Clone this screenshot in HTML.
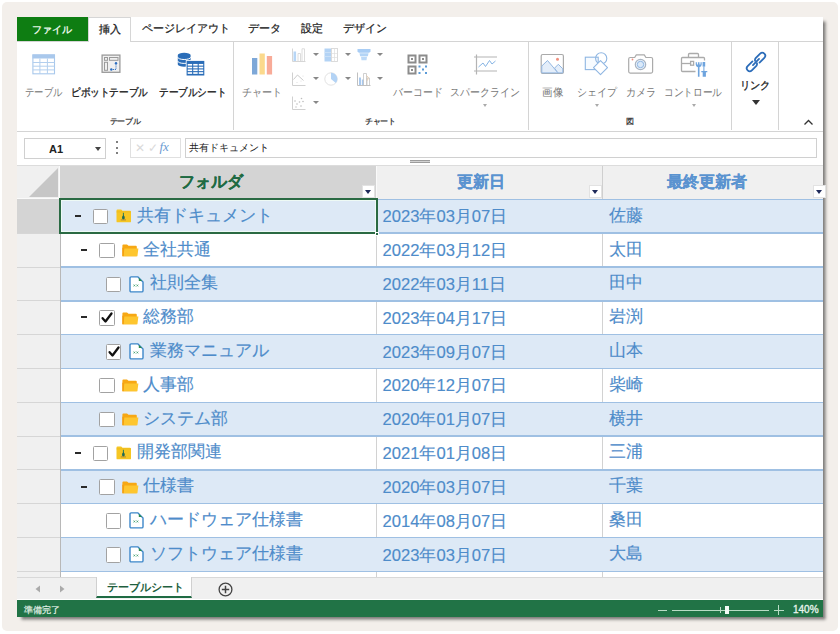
<!DOCTYPE html>
<html><head><meta charset="utf-8">
<style>
*{box-sizing:border-box;margin:0;padding:0}
html,body{width:840px;height:634px;overflow:hidden;background:#fff;font-family:"Liberation Sans",sans-serif}
div,svg{position:absolute}
#frame{left:2px;top:2px;width:836px;height:629px;background:#f3efeb;border-radius:5px}
#app{left:17px;top:17px;width:806px;height:600px;background:#fff;box-shadow:3px 3px 3px -.5px rgba(0,0,0,.5)}
.tab{top:17px;height:25px;font-size:11px;line-height:23px;color:#222;white-space:nowrap;-webkit-text-stroke:.25px #222}
.hl{height:1px;background:#d4d4d4}
.vl{width:1px;background:#d4d4d4}
.lbl{font-size:11px;color:#777;white-space:nowrap;line-height:14px;transform-origin:0 0}
.glbl{font-size:8px;font-weight:bold;color:#444;white-space:nowrap;line-height:10px;letter-spacing:-.3px}
.dd{width:0;height:0;border-left:3px solid transparent;border-right:3px solid transparent;border-top:3.5px solid #888}
.cell{font-size:17px;color:#4e8cca;white-space:nowrap;line-height:20px;-webkit-text-stroke:.15px #4e8cca}
.rhc{left:17px;width:43px;height:34px;background:#f0f0f0}
.band{left:60px;width:763px;background:#dde9f6}
.bl{left:60px;width:763px;height:1.5px;background:#9fc0e3}
.cb{width:15.5px;height:15.5px;border:1.6px solid #a2a2a2;border-radius:1.5px;background:#fff}
.dash{width:5.5px;height:2px;background:#2a2a2a}
</style></head><body>
<div id="frame"></div>
<div id="app"></div>

<!-- tabs -->
<div class="tab" style="left:17px;width:70.5px;background:#0e7d12;color:#e6f6e6;text-align:center;font-weight:bold;font-size:10px;-webkit-text-stroke:0;line-height:26px">ファイル</div>
<div class="hl" style="left:17px;top:41px;width:806px"></div>
<div class="tab" style="left:88px;width:42.5px;height:25px;background:#fff;border:1px solid #d6d6d6;border-bottom:none;text-align:center;z-index:2;line-height:23px;font-size:10.5px;padding-left:2px">挿入</div>
<div class="tab" style="left:142px">ページレイアウト</div>
<div class="tab" style="left:247.5px">データ</div>
<div class="tab" style="left:300.5px">設定</div>
<div class="tab" style="left:342.5px">デザイン</div>

<!-- ribbon separators -->
<div class="vl" style="left:233px;top:42px;height:88px"></div>
<div class="vl" style="left:527.5px;top:42px;height:88px"></div>
<div class="vl" style="left:731px;top:42px;height:88px"></div>
<div class="vl" style="left:778px;top:42px;height:88px"></div>
<div class="hl" style="left:17px;top:130.5px;width:806px"></div>

<!-- table group -->
<svg style="left:31px;top:53px" width="25" height="22" viewBox="0 0 25 22">
 <rect x="1.9" y="1.9" width="21.6" height="18.9" fill="#fff" stroke="#a9c8ec" stroke-width="1.1"/>
 <rect x="1.5" y="1.5" width="22.4" height="4" fill="#a9c8ec"/>
 <path d="M1.9 9.5H23.5M1.9 13.2H23.5M1.9 16.9H23.5M8.9 5.5V20.8M16.4 5.5V20.8" stroke="#b3cfee" stroke-width="1"/>
</svg>
<div class="lbl" style="left:25.15px;top:85.2px;transform:scaleX(0.851);">テーブル</div>

<svg style="left:101px;top:54px" width="20" height="20" viewBox="0 0 20 20">
 <rect x="1.1" y="1.1" width="17.8" height="17.2" fill="#f0f0f0" stroke="#9a9a9a" stroke-width="1.3"/>
 <g fill="none" stroke="#9a9a9a" stroke-width="1"><rect x="3.5" y="3.5" width="3" height="2.8"/><rect x="8.5" y="3.5" width="8.5" height="2.8"/><rect x="3.5" y="8.3" width="3" height="8"/></g>
 <path d="M15 9.5V15.5H10.5" fill="none" stroke="#3a78c4" stroke-width="1" stroke-dasharray="1.2 .8"/>
 <circle cx="15" cy="9.3" r="1.2" fill="#2e6fc0"/><circle cx="10.3" cy="15.5" r="1.2" fill="#2e6fc0"/>
</svg>
<div class="lbl" style="left:71.26px;top:85.2px;transform:scaleX(0.872);color:#222;-webkit-text-stroke:.35px #222;">ピボットテーブル</div>

<svg style="left:172px;top:48px" width="40" height="32" viewBox="0 0 40 32">
 <path d="M5.8 7V16.5A6.4 2.2 0 0 0 18.6 16.5V7A6.4 2.2 0 0 0 5.8 7z" fill="#2a6db8"/>
 <path d="M5.8 9.3A6.4 2.2 0 0 0 18.6 9.3M5.8 13.2A6.4 2.2 0 0 0 18.6 13.2" fill="none" stroke="#fff" stroke-width="1"/>
 <rect x="13.8" y="12.1" width="19.3" height="16.2" fill="#fff"/>
 <rect x="14.6" y="12.9" width="17.7" height="14.6" fill="#2a6db8"/>
 <rect x="15.70" y="15.95" width="4.43" height="1.65" fill="#fff"/><rect x="15.70" y="18.70" width="4.43" height="1.65" fill="#fff"/><rect x="15.70" y="21.45" width="4.43" height="1.65" fill="#fff"/><rect x="15.70" y="24.20" width="4.43" height="1.65" fill="#fff"/><rect x="21.23" y="15.95" width="4.43" height="1.65" fill="#fff"/><rect x="21.23" y="18.70" width="4.43" height="1.65" fill="#fff"/><rect x="21.23" y="21.45" width="4.43" height="1.65" fill="#fff"/><rect x="21.23" y="24.20" width="4.43" height="1.65" fill="#fff"/><rect x="26.77" y="15.95" width="4.43" height="1.65" fill="#fff"/><rect x="26.77" y="18.70" width="4.43" height="1.65" fill="#fff"/><rect x="26.77" y="21.45" width="4.43" height="1.65" fill="#fff"/><rect x="26.77" y="24.20" width="4.43" height="1.65" fill="#fff"/>
</svg>
<div class="lbl" style="left:159.00px;top:85.2px;transform:scaleX(0.873);color:#222;-webkit-text-stroke:.35px #222;">テーブルシート</div>
<div class="glbl" style="left:109.5px;top:117px">テーブル</div>

<!-- chart group -->
<svg style="left:251px;top:52px" width="23" height="24" viewBox="0 0 23 24">
 <rect x="1" y="6" width="5.3" height="16.5" fill="#7ea8d8"/>
 <rect x="8.5" y="1.5" width="5.3" height="21" fill="#fbd98c"/>
 <rect x="15.8" y="4" width="5.3" height="18.5" fill="#f8ab98"/>
</svg>
<div class="lbl" style="left:242.09px;top:85.2px;transform:scaleX(0.915);">チャート</div>

<svg style="left:292px;top:48px" width="14" height="14" viewBox="0 0 14 14">
 <path d="M0.5 0.5v13h13" fill="none" stroke="#d6d6d6" stroke-width="1"/>
 <rect x="1.5" y="3.5" width="2.6" height="9.5" fill="#b7d6f6"/>
 <path d="M6 13V5.5h2.5V13M10 13V0.8h2.5V13" fill="none" stroke="#d8d8d8" stroke-width=".9"/>
</svg>
<div class="dd" style="left:312.5px;top:53px"></div>
<svg style="left:324px;top:48px" width="14" height="14" viewBox="0 0 14 14">
 <rect x="0.5" y="0.5" width="6.5" height="13" fill="#b3d3f5"/>
 <path d="M0.5 4.5h6.5M0.5 8.5h6.5" stroke="#cfe3f8" stroke-width=".8"/>
 <rect x="7.5" y="0.5" width="6" height="13" fill="none" stroke="#d8d8d8" stroke-width=".9"/>
 <path d="M10.5 0.5v13M7.5 5.5h6M7.5 9.5h6" stroke="#dedede" stroke-width=".7"/>
</svg>
<div class="dd" style="left:344.5px;top:53px"></div>
<svg style="left:357px;top:48px" width="14" height="14" viewBox="0 0 14 14">
 <path d="M0.5 1h13v2.8l-1.5 1H2l-1.5-1z" fill="#a8cdf5"/>
 <path d="M2.5 5.3h9l-.6 3H3.1z" fill="#b3d4f6"/>
 <path d="M4 8.8h6l-.5 3.5h-5z" fill="#bcd9f7"/>
</svg>
<div class="dd" style="left:376.5px;top:53px"></div>

<svg style="left:292px;top:72px" width="14" height="14" viewBox="0 0 14 14">
 <path d="M0.5 0.5v13h13" fill="none" stroke="#d0d0d0" stroke-width="1"/>
 <path d="M1.5 7.5L5.5 3l6 5.5" fill="none" stroke="#c4c4c4" stroke-width=".9"/>
 <g fill="#dcdcdc"><circle cx="5" cy="10.5" r=".6"/><circle cx="9" cy="9" r=".6"/><circle cx="11" cy="4" r=".6"/></g>
</svg>
<div class="dd" style="left:312.5px;top:77px"></div>
<svg style="left:324px;top:72px" width="14" height="14" viewBox="0 0 14 14">
 <circle cx="7" cy="7" r="6.2" fill="#fff" stroke="#e2e2e2" stroke-width="1"/>
 <path d="M7 0.8A6.2 6.2 0 0 1 11.8 11L7 7z" fill="#b3d3f5"/>
</svg>
<div class="dd" style="left:344.5px;top:77px"></div>
<svg style="left:357px;top:72px" width="14" height="14" viewBox="0 0 14 14">
 <path d="M0.5 0.5v13h13" fill="none" stroke="#c0c0c0" stroke-width="1"/>
 <rect x="2" y="5.5" width="2" height="7.5" fill="#a9c9ee"/><rect x="4.8" y="7.5" width="2" height="5.5" fill="#a9c9ee"/>
 <path d="M6.5 13V1.5h3V13M10 13V6h2.5V13" fill="none" stroke="#c4c4c4" stroke-width=".8"/>
 <path d="M9.5 3.5q3 1.5 1 5" fill="none" stroke="#e8c9a8" stroke-width=".9"/>
</svg>
<div class="dd" style="left:376.5px;top:77px"></div>

<svg style="left:292px;top:96px" width="14" height="14" viewBox="0 0 14 14">
 <path d="M0.5 0.5v13h13" fill="none" stroke="#d0d0d0" stroke-width="1"/>
 <g fill="#bdbdbd"><circle cx="3" cy="5" r=".8"/><circle cx="9.5" cy="2.5" r=".8"/><circle cx="5" cy="8" r=".8"/><circle cx="7.5" cy="6" r=".8"/><circle cx="11" cy="5.5" r=".8"/><circle cx="9" cy="10" r=".8"/><circle cx="4" cy="11" r=".7"/></g>
</svg>
<div class="dd" style="left:312.5px;top:101px"></div>

<svg style="left:407px;top:54px" width="22" height="21" viewBox="0 0 22 21">
 <g fill="none" stroke="#8c8c8c" stroke-width="2"><rect x="1.5" y="1.5" width="7" height="7"/><rect x="12.5" y="1.5" width="7" height="7"/><rect x="1.5" y="12.5" width="7" height="7"/></g>
 <g fill="#8c8c8c"><rect x="4" y="4" width="2" height="2"/><rect x="15" y="4" width="2" height="2"/><rect x="4" y="15" width="2" height="2"/></g>
 <g fill="#5b9bd8"><rect x="11.5" y="11.5" width="2" height="2"/><rect x="18" y="11.5" width="2" height="2"/><rect x="15" y="14.5" width="2" height="2"/><rect x="11.5" y="18" width="2" height="2"/><rect x="18" y="18" width="2" height="2"/></g>
</svg>
<div class="lbl" style="left:393.10px;top:85.2px;transform:scaleX(0.898);">バーコード</div>

<svg style="left:472px;top:54px" width="27" height="21" viewBox="0 0 27 21">
 <path d="M4.5 0.5V20.5M2 3H25M2 17H25" stroke="#b4b4b4" stroke-width="1.2"/>
 <path d="M6.5 13L11 9L13.5 12.5L17.5 6.5L20 10L23.5 7" fill="none" stroke="#86b4e4" stroke-width="1"/>
</svg>
<div class="lbl" style="left:449.59px;top:85.2px;transform:scaleX(0.905);">スパークライン</div>
<div class="dd" style="left:483px;top:104px;border-top-color:#aaa;border-left-width:2.5px;border-right-width:2.5px;border-top-width:3px"></div>
<div class="glbl" style="left:365px;top:117px">チャート</div>

<!-- figure group -->
<svg style="left:540px;top:53px" width="25" height="23" viewBox="0 0 25 23">
 <rect x="1.2" y="1.5" width="22.2" height="19" rx="1.5" fill="#fff" stroke="#aaa" stroke-width="1.2"/>
 <path d="M1.8 13L7.5 7.5L18 19.9H1.8z" fill="#e4eefa" stroke="#93b7e1" stroke-width="1"/>
 <path d="M14.5 15.2L18.3 11.3L22.8 15.8V19.9H18z" fill="#e4eefa" stroke="#93b7e1" stroke-width="1"/>
 <circle cx="17.5" cy="6.2" r="1.5" fill="#f0907f"/>
</svg>
<div class="lbl" style="left:541.54px;top:85.2px;transform:scaleX(0.955);">画像</div>

<svg style="left:584px;top:52px" width="26" height="24" viewBox="0 0 26 24">
 <rect x="1.3" y="5.2" width="12.9" height="12.4" fill="#f7fbff" stroke="#8fb6e2" stroke-width="1.1"/>
 <circle cx="17.2" cy="6.4" r="5.6" fill="none" stroke="#8fb6e2" stroke-width="1.1"/>
 <path d="M16.5 8.6L23.5 15.6L16.5 22.6L9.5 15.6z" fill="#fff" stroke="#8fb6e2" stroke-width="1.1" stroke-linejoin="round"/>
</svg>
<div class="lbl" style="left:576.79px;top:85.2px;transform:scaleX(0.91);">シェイプ</div>
<div class="dd" style="left:594.5px;top:104px;border-top-color:#aaa;border-left-width:2.5px;border-right-width:2.5px;border-top-width:3px"></div>

<svg style="left:627px;top:53px" width="28" height="22" viewBox="0 0 28 22">
 <path d="M3.2 4.5h4.5l1.6-2.6h8l1.6 2.6h5.2q1.5 0 1.5 1.5v12.6q0 1.5-1.5 1.5H3.2q-1.5 0-1.5-1.5V6q0-1.5 1.5-1.5z" fill="#fff" stroke="#ababab" stroke-width="1.2" stroke-linejoin="round"/>
 <circle cx="13.5" cy="11.5" r="5.2" fill="#e9f2fc" stroke="#a9b4c2" stroke-width="1.2"/>
 <circle cx="13.5" cy="11.5" r="3.2" fill="#dbeafa" stroke="#8fb6e2" stroke-width="1"/>
 <circle cx="5.5" cy="6.5" r=".9" fill="#f08f80"/>
</svg>
<div class="lbl" style="left:625.88px;top:85.2px;transform:scaleX(0.923);">カメラ</div>

<svg style="left:676px;top:48px" width="36" height="32" viewBox="0 0 36 32">
 <g fill="none" stroke="#ababab" stroke-width="1.3">
 <path d="M19.5 23.5H6.5Q5.5 23.5 5.5 22.5V10.5Q5.5 9.5 6.5 9.5H27.5Q28.5 9.5 28.5 10.5V12.5"/>
 <path d="M12.5 9.5V6.5Q12.5 5.5 13.5 5.5H21.5Q22.5 5.5 22.5 6.5V9.5"/>
 <path d="M5.5 15.5H14.5"/><rect x="14.6" y="13.4" width="3" height="3.8"/>
 </g>
 <path d="M19.7 14.3v2.3q0 2.3 2.2 2.6v9.6h1.6v-9.6q2.2-.3 2.2-2.6v-2.3h-1.2v2.2h-1v-2.2h-1.6v2.2h-1v-2.2z" fill="#6ea4de"/>
 <rect x="26.6" y="14" width="2.6" height="4.6" fill="#6ea4de"/><rect x="27.4" y="18.5" width="1" height="4.5" fill="#6ea4de"/>
 <path d="M25.3 23h6v1.2h-1.4v4.6h-3.2v-4.6h-1.4z" fill="#6ea4de"/>
</svg>
<div class="lbl" style="left:664.24px;top:85.2px;transform:scaleX(0.881);">コントロール</div>
<div class="dd" style="left:692px;top:104px;border-top-color:#aaa;border-left-width:2.5px;border-right-width:2.5px;border-top-width:3px"></div>
<div class="glbl" style="left:626px;top:117px">図</div>

<!-- link -->
<svg style="left:744.5px;top:50.8px" width="22" height="22" viewBox="0 0 22 22">
 <g transform="translate(11 11) rotate(-45) scale(.95)" fill="none" stroke="#2b6cb9" stroke-width="1.9" stroke-linecap="round">
 <path d="M-2.2 -3.1H-9.3A3.1 3.1 0 0 0 -9.3 3.1H-2.6A3.1 3.1 0 0 0 -0.2 1.6"/>
 <path d="M2.2 3.1H9.3A3.1 3.1 0 0 0 9.3 -3.1H2.6A3.1 3.1 0 0 0 0.2 -1.6"/>
 <path d="M-4.5 0H4.5"/>
 </g>
</svg>
<div class="lbl" style="left:740.14px;top:77.8px;transform:scaleX(0.931);color:#222;-webkit-text-stroke:.3px #222">リンク</div>
<div class="dd" style="left:752px;top:99.5px;border-top-color:#333;border-left-width:4px;border-right-width:4px;border-top-width:5px"></div>
<svg style="left:803px;top:119px" width="11" height="7" viewBox="0 0 11 7"><path d="M1.5 5.5l4-4 4 4" fill="none" stroke="#333" stroke-width="1.3"/></svg>

<!-- formula bar -->
<div style="left:24px;top:138px;width:81.5px;height:21px;border:1px solid #d0d0d0;background:#fff"></div>
<div style="left:49px;top:141px;font-size:11px;font-weight:bold;color:#222;line-height:16px">A1</div>
<div class="dd" style="left:95px;top:147px;border-top-color:#444;border-left-width:3.5px;border-right-width:3.5px;border-top-width:4.5px"></div>
<div style="left:116.3px;top:141px;width:2.2px;height:2.2px;background:#555;border-radius:1px"></div>
<div style="left:116.3px;top:146.5px;width:2.2px;height:2.2px;background:#555;border-radius:1px"></div>
<div style="left:116.3px;top:152px;width:2.2px;height:2.2px;background:#555;border-radius:1px"></div>
<div style="left:130px;top:138px;width:51px;height:19.5px;border:1px solid #e0e0e0;background:#fff"></div>
<div style="left:135px;top:140px;font-size:12px;color:#dadada;line-height:16px">✕ ✓</div>
<div style="left:159.5px;top:138.5px;font-size:13px;color:#6b9bd2;font-style:italic;font-family:'Liberation Serif',serif;line-height:16px">fx</div>
<div style="left:185px;top:138px;width:632px;height:19.5px;border:1px solid #d0d0d0;background:#fff"></div>
<div style="left:188.5px;top:141px;font-size:10px;color:#222;line-height:14px">共有ドキュメント</div>
<div style="left:410.3px;top:160px;width:19.7px;height:3px;background:linear-gradient(#9c9c9c 0 1px,#d2d2d2 1px 2px,#9c9c9c 2px 3px)"></div>

<!-- grid header -->
<div style="left:17px;top:165px;width:806px;height:34px;background:#f0f0f0"></div>
<div style="left:17px;top:165px;width:806px;height:1px;background:#dcdcdc"></div>
<svg style="left:28px;top:167px" width="31" height="31" viewBox="0 0 31 31"><path d="M30 1V30H1z" fill="#c6c6c6"/></svg>
<div style="left:60px;top:165.5px;width:316px;height:33px;background:#d4d4d4"></div>
<div style="left:602px;top:165.5px;width:1px;height:33px;background:#cfcfcf"></div>
<div style="left:376px;top:165.5px;width:1px;height:33px;background:#fafafa"></div>
<div style="left:59px;top:165.5px;width:1px;height:33px;background:#fafafa"></div>
<div style="left:17px;top:197.5px;width:43px;height:1px;background:#fafafa"></div>
<div style="left:178.5px;top:172px;font-size:16px;font-weight:bold;color:#1f6b43;line-height:20px;-webkit-text-stroke:.2px #1f6b43">フォルダ</div>
<div style="left:457px;top:172px;font-size:16px;font-weight:bold;color:#5a93d0;line-height:20px;-webkit-text-stroke:.2px #5a93d0">更新日</div>
<div style="left:666.5px;top:172px;font-size:16px;font-weight:bold;color:#5a93d0;line-height:20px;-webkit-text-stroke:.2px #5a93d0">最終更新者</div>
<div style="left:17px;top:199.4px;width:43px;height:33.81px;background:#d4d4d4"></div>
<div class="band" style="top:199.4px;height:33.81px"></div>
<div style="left:17px;top:233.21px;width:43px;height:33.81px;background:#f0f0f0"></div>
<div class="vl" style="left:376px;top:233.21px;height:33.81px;background:#d2d2d2"></div>
<div class="vl" style="left:602px;top:233.21px;height:33.81px;background:#d2d2d2"></div>
<div style="left:17px;top:267.02px;width:43px;height:33.81px;background:#f0f0f0"></div>
<div class="band" style="top:267.02px;height:33.81px"></div>
<div style="left:17px;top:300.83px;width:43px;height:33.81px;background:#f0f0f0"></div>
<div class="vl" style="left:376px;top:300.83px;height:33.81px;background:#d2d2d2"></div>
<div class="vl" style="left:602px;top:300.83px;height:33.81px;background:#d2d2d2"></div>
<div style="left:17px;top:334.64px;width:43px;height:33.81px;background:#f0f0f0"></div>
<div class="band" style="top:334.64px;height:33.81px"></div>
<div style="left:17px;top:368.45px;width:43px;height:33.81px;background:#f0f0f0"></div>
<div class="vl" style="left:376px;top:368.45px;height:33.81px;background:#d2d2d2"></div>
<div class="vl" style="left:602px;top:368.45px;height:33.81px;background:#d2d2d2"></div>
<div style="left:17px;top:402.26px;width:43px;height:33.81px;background:#f0f0f0"></div>
<div class="band" style="top:402.26px;height:33.81px"></div>
<div style="left:17px;top:436.07px;width:43px;height:33.81px;background:#f0f0f0"></div>
<div class="vl" style="left:376px;top:436.07px;height:33.81px;background:#d2d2d2"></div>
<div class="vl" style="left:602px;top:436.07px;height:33.81px;background:#d2d2d2"></div>
<div style="left:17px;top:469.88px;width:43px;height:33.81px;background:#f0f0f0"></div>
<div class="band" style="top:469.88px;height:33.81px"></div>
<div style="left:17px;top:503.69px;width:43px;height:33.81px;background:#f0f0f0"></div>
<div class="vl" style="left:376px;top:503.69px;height:33.81px;background:#d2d2d2"></div>
<div class="vl" style="left:602px;top:503.69px;height:33.81px;background:#d2d2d2"></div>
<div style="left:17px;top:537.5px;width:43px;height:33.81px;background:#f0f0f0"></div>
<div class="band" style="top:537.5px;height:33.81px"></div>
<div style="left:17px;top:571.31px;width:43px;height:5.69px;background:#f0f0f0"></div>
<div class="vl" style="left:376px;top:571.31px;height:5.69px;background:#d2d2d2"></div>
<div class="vl" style="left:602px;top:571.31px;height:5.69px;background:#d2d2d2"></div>
<div style="left:17px;top:232.71px;width:43px;height:1px;background:#d6d6d6"></div>
<div style="left:17px;top:266.52px;width:43px;height:1px;background:#d6d6d6"></div>
<div style="left:17px;top:300.33px;width:43px;height:1px;background:#d6d6d6"></div>
<div style="left:17px;top:334.14px;width:43px;height:1px;background:#d6d6d6"></div>
<div style="left:17px;top:367.95px;width:43px;height:1px;background:#d6d6d6"></div>
<div style="left:17px;top:401.76px;width:43px;height:1px;background:#d6d6d6"></div>
<div style="left:17px;top:435.57px;width:43px;height:1px;background:#d6d6d6"></div>
<div style="left:17px;top:469.38px;width:43px;height:1px;background:#d6d6d6"></div>
<div style="left:17px;top:503.19px;width:43px;height:1px;background:#d6d6d6"></div>
<div style="left:17px;top:537px;width:43px;height:1px;background:#d6d6d6"></div>
<div style="left:17px;top:570.81px;width:43px;height:1px;background:#d6d6d6"></div>
<div class="bl" style="top:198.65px"></div>
<div class="bl" style="top:232.46px"></div>
<div class="bl" style="top:266.27px"></div>
<div class="bl" style="top:300.08px"></div>
<div class="bl" style="top:333.89px"></div>
<div class="bl" style="top:367.7px"></div>
<div class="bl" style="top:401.51px"></div>
<div class="bl" style="top:435.32px"></div>
<div class="bl" style="top:469.13px"></div>
<div class="bl" style="top:502.94px"></div>
<div class="bl" style="top:536.75px"></div>
<div class="bl" style="top:570.56px"></div>
<div style="left:59.5px;top:199px;width:1px;height:378px;background:#b8b8b8"></div>
<div class="dash" style="left:75px;top:215.06px"></div>
<div class="cb" style="left:92.9px;top:208.91px"></div>
<svg style="left:115.5px;top:209.11px" width="16" height="14" viewBox="0 0 16 14"><path d="M0.5 1.6q0-1.1 1.1-1.1h3.6l1.3 1.2h7.4q1.1 0 1.1 1.1v9.6q0 .9-.9.9H1.4q-.9 0-.9-.9z" fill="#f6c623"/><path d="M0.5 2.9h14.5" stroke="#e8b51a" stroke-width=".6"/><path d="M7.4 3.8v3.5" stroke="#2a7a5a" stroke-width="1"/><path d="M7.4 6q-2 1.8-1.3 3.4q.5 1 1.3 1q.8 0 1.3-1q.7-1.6-1.3-3.4z" fill="#1f6a55"/><path d="M4.8 10.9h5.2" stroke="#9a7a3a" stroke-width=".8"/></svg>
<div class="cell" style="left:136.5px;top:205.81px">共有ドキュメント</div>
<div class="cell" style="left:382.5px;top:207.41px;font-size:16.6px">2023年03月07日</div>
<div class="cell" style="left:608.5px;top:205.81px">佐藤</div>
<div class="dash" style="left:81.4px;top:248.87px"></div>
<div class="cb" style="left:99.3px;top:242.72px"></div>
<svg style="left:121.9px;top:243.92px" width="17" height="13" viewBox="0 0 17 13"><path d="M0.4 1.4q0-1 1-1h3.6l1.5 1.4h7.4q.9 0 .9.9V12.3H0.4z" fill="#f7a814"/><path d="M2.4 4.6H16.4L15.4 12.3H1.4z" fill="#fec62f"/><path d="M0.4 3.5V12.3H1.6V4.5z" fill="#f29b0c"/></svg>
<div class="cell" style="left:142.9px;top:239.62px">全社共通</div>
<div class="cell" style="left:382.5px;top:241.22px;font-size:16.6px">2022年03月12日</div>
<div class="cell" style="left:608.5px;top:239.62px">太田</div>
<div class="cb" style="left:105.7px;top:276.53px"></div>
<svg style="left:129.2px;top:275.73px" width="15" height="17" viewBox="0 0 15 17"><path d="M2.2 0.9h6.8l5 5v8.8q0 1.2-1.2 1.2H2.2q-1.2 0-1.2-1.2V2.1q0-1.2 1.2-1.2z" fill="#fff" stroke="#3d87c9" stroke-width="1.4" stroke-linejoin="round"/><path d="M9.8 1.8l3.3 3.3h-3.3z" fill="#2b8a4e"/><path d="M4.6 8.6l1.6 1.8M6.2 8.6l-1.6 1.8M7.6 8.6l1.6 1.8M9.2 8.6l-1.6 1.8" stroke="#3a9a6a" stroke-width=".8"/></svg>
<div class="cell" style="left:149.8px;top:273.43px">社則全集</div>
<div class="cell" style="left:382.5px;top:275.03px;font-size:16.6px">2022年03月11日</div>
<div class="cell" style="left:608.5px;top:273.43px">田中</div>
<div class="dash" style="left:81.4px;top:316.49px"></div>
<div class="cb" style="left:99.3px;top:310.34px"></div>
<svg style="left:99.3px;top:310.04px" width="16" height="16" viewBox="0 0 16 16"><path d="M3.6 8.2l2.9 3.3 6-8" fill="none" stroke="#111" stroke-width="2.3" stroke-linecap="round" stroke-linejoin="round"/></svg>
<svg style="left:121.9px;top:311.54px" width="17" height="13" viewBox="0 0 17 13"><path d="M0.4 1.4q0-1 1-1h3.6l1.5 1.4h7.4q.9 0 .9.9V12.3H0.4z" fill="#f7a814"/><path d="M2.4 4.6H16.4L15.4 12.3H1.4z" fill="#fec62f"/><path d="M0.4 3.5V12.3H1.6V4.5z" fill="#f29b0c"/></svg>
<div class="cell" style="left:142.9px;top:307.24px">総務部</div>
<div class="cell" style="left:382.5px;top:308.84px;font-size:16.6px">2023年04月17日</div>
<div class="cell" style="left:608.5px;top:307.24px">岩渕</div>
<div class="cb" style="left:105.7px;top:344.15px"></div>
<svg style="left:105.7px;top:343.85px" width="16" height="16" viewBox="0 0 16 16"><path d="M3.6 8.2l2.9 3.3 6-8" fill="none" stroke="#111" stroke-width="2.3" stroke-linecap="round" stroke-linejoin="round"/></svg>
<svg style="left:129.2px;top:343.35px" width="15" height="17" viewBox="0 0 15 17"><path d="M2.2 0.9h6.8l5 5v8.8q0 1.2-1.2 1.2H2.2q-1.2 0-1.2-1.2V2.1q0-1.2 1.2-1.2z" fill="#fff" stroke="#3d87c9" stroke-width="1.4" stroke-linejoin="round"/><path d="M9.8 1.8l3.3 3.3h-3.3z" fill="#2b8a4e"/><path d="M4.6 8.6l1.6 1.8M6.2 8.6l-1.6 1.8M7.6 8.6l1.6 1.8M9.2 8.6l-1.6 1.8" stroke="#3a9a6a" stroke-width=".8"/></svg>
<div class="cell" style="left:149.8px;top:341.05px">業務マニュアル</div>
<div class="cell" style="left:382.5px;top:342.65px;font-size:16.6px">2023年09月07日</div>
<div class="cell" style="left:608.5px;top:341.05px">山本</div>
<div class="cb" style="left:99.3px;top:377.96px"></div>
<svg style="left:121.9px;top:379.16px" width="17" height="13" viewBox="0 0 17 13"><path d="M0.4 1.4q0-1 1-1h3.6l1.5 1.4h7.4q.9 0 .9.9V12.3H0.4z" fill="#f7a814"/><path d="M2.4 4.6H16.4L15.4 12.3H1.4z" fill="#fec62f"/><path d="M0.4 3.5V12.3H1.6V4.5z" fill="#f29b0c"/></svg>
<div class="cell" style="left:142.9px;top:374.86px">人事部</div>
<div class="cell" style="left:382.5px;top:376.46px;font-size:16.6px">2020年12月07日</div>
<div class="cell" style="left:608.5px;top:374.86px">柴崎</div>
<div class="cb" style="left:99.3px;top:411.77px"></div>
<svg style="left:121.9px;top:412.97px" width="17" height="13" viewBox="0 0 17 13"><path d="M0.4 1.4q0-1 1-1h3.6l1.5 1.4h7.4q.9 0 .9.9V12.3H0.4z" fill="#f7a814"/><path d="M2.4 4.6H16.4L15.4 12.3H1.4z" fill="#fec62f"/><path d="M0.4 3.5V12.3H1.6V4.5z" fill="#f29b0c"/></svg>
<div class="cell" style="left:142.9px;top:408.67px">システム部</div>
<div class="cell" style="left:382.5px;top:410.27px;font-size:16.6px">2020年01月07日</div>
<div class="cell" style="left:608.5px;top:408.67px">横井</div>
<div class="dash" style="left:75px;top:451.73px"></div>
<div class="cb" style="left:92.9px;top:445.58px"></div>
<svg style="left:115.5px;top:445.78px" width="16" height="14" viewBox="0 0 16 14"><path d="M0.5 1.6q0-1.1 1.1-1.1h3.6l1.3 1.2h7.4q1.1 0 1.1 1.1v9.6q0 .9-.9.9H1.4q-.9 0-.9-.9z" fill="#f6c623"/><path d="M0.5 2.9h14.5" stroke="#e8b51a" stroke-width=".6"/><path d="M7.4 3.8v3.5" stroke="#2a7a5a" stroke-width="1"/><path d="M7.4 6q-2 1.8-1.3 3.4q.5 1 1.3 1q.8 0 1.3-1q.7-1.6-1.3-3.4z" fill="#1f6a55"/><path d="M4.8 10.9h5.2" stroke="#9a7a3a" stroke-width=".8"/></svg>
<div class="cell" style="left:136.5px;top:442.48px">開発部関連</div>
<div class="cell" style="left:382.5px;top:444.08px;font-size:16.6px">2021年01月08日</div>
<div class="cell" style="left:608.5px;top:442.48px">三浦</div>
<div class="dash" style="left:81.4px;top:485.53px"></div>
<div class="cb" style="left:99.3px;top:479.38px"></div>
<svg style="left:121.9px;top:480.58px" width="17" height="13" viewBox="0 0 17 13"><path d="M0.4 1.4q0-1 1-1h3.6l1.5 1.4h7.4q.9 0 .9.9V12.3H0.4z" fill="#f7a814"/><path d="M2.4 4.6H16.4L15.4 12.3H1.4z" fill="#fec62f"/><path d="M0.4 3.5V12.3H1.6V4.5z" fill="#f29b0c"/></svg>
<div class="cell" style="left:142.9px;top:476.28px">仕様書</div>
<div class="cell" style="left:382.5px;top:477.88px;font-size:16.6px">2020年03月07日</div>
<div class="cell" style="left:608.5px;top:476.28px">千葉</div>
<div class="cb" style="left:105.7px;top:513.2px"></div>
<svg style="left:129.2px;top:512.39px" width="15" height="17" viewBox="0 0 15 17"><path d="M2.2 0.9h6.8l5 5v8.8q0 1.2-1.2 1.2H2.2q-1.2 0-1.2-1.2V2.1q0-1.2 1.2-1.2z" fill="#fff" stroke="#3d87c9" stroke-width="1.4" stroke-linejoin="round"/><path d="M9.8 1.8l3.3 3.3h-3.3z" fill="#2b8a4e"/><path d="M4.6 8.6l1.6 1.8M6.2 8.6l-1.6 1.8M7.6 8.6l1.6 1.8M9.2 8.6l-1.6 1.8" stroke="#3a9a6a" stroke-width=".8"/></svg>
<div class="cell" style="left:149.8px;top:510.1px">ハードウェア仕様書</div>
<div class="cell" style="left:382.5px;top:511.7px;font-size:16.6px">2014年08月07日</div>
<div class="cell" style="left:608.5px;top:510.1px">桑田</div>
<div class="cb" style="left:105.7px;top:547px"></div>
<svg style="left:129.2px;top:546.2px" width="15" height="17" viewBox="0 0 15 17"><path d="M2.2 0.9h6.8l5 5v8.8q0 1.2-1.2 1.2H2.2q-1.2 0-1.2-1.2V2.1q0-1.2 1.2-1.2z" fill="#fff" stroke="#3d87c9" stroke-width="1.4" stroke-linejoin="round"/><path d="M9.8 1.8l3.3 3.3h-3.3z" fill="#2b8a4e"/><path d="M4.6 8.6l1.6 1.8M6.2 8.6l-1.6 1.8M7.6 8.6l1.6 1.8M9.2 8.6l-1.6 1.8" stroke="#3a9a6a" stroke-width=".8"/></svg>
<div class="cell" style="left:149.8px;top:543.9px">ソフトウェア仕様書</div>
<div class="cell" style="left:382.5px;top:545.5px;font-size:16.6px">2023年03月07日</div>
<div class="cell" style="left:608.5px;top:543.9px">大島</div>
<div style="left:59px;top:198px;width:319px;height:35.8px;border:2px solid #2a6a43"></div><div style="left:61px;top:200px;width:315px;height:31.8px;border:1px solid #eefaf5"></div>
<div style="left:375.3px;top:231.5px;width:4px;height:4px;background:#2a6a43;border:0.5px solid #fff"></div>
<div style="left:361.5px;top:185px;width:13px;height:13px;background:#fff;border:1px solid #e2e2e2"></div>
<div class="dd" style="left:364.8px;top:190px;border-top-color:#1f2a5a;border-left-width:3.2px;border-right-width:3.2px;border-top-width:4px"></div>
<div style="left:589px;top:185px;width:13px;height:13px;background:#fff;border:1px solid #e2e2e2"></div>
<div class="dd" style="left:592.3px;top:190px;border-top-color:#1f2a5a;border-left-width:3.2px;border-right-width:3.2px;border-top-width:4px"></div>
<div style="left:813px;top:185px;width:13px;height:13px;background:#fff;border:1px solid #e2e2e2"></div>
<div class="dd" style="left:816.3px;top:190px;border-top-color:#1f2a5a;border-left-width:3.2px;border-right-width:3.2px;border-top-width:4px"></div>
<!-- sheet tabs -->
<div style="left:17px;top:577px;width:806px;height:23px;background:#f0f0f0"></div>
<div style="left:17px;top:576.5px;width:806px;height:1px;background:#d8d8d8"></div>
<svg style="left:35px;top:585px" width="6" height="8" viewBox="0 0 6 8"><path d="M5 0.5v7L0.5 4z" fill="#aaa"/></svg>
<svg style="left:59px;top:585px" width="6" height="8" viewBox="0 0 6 8"><path d="M1 0.5v7L5.5 4z" fill="#aaa"/></svg>
<div style="left:95.5px;top:577px;width:96px;height:21px;background:#fff;border-left:1px solid #d0d0d0;border-right:1px solid #d0d0d0;border-bottom:2px solid #1f6b43"></div>
<div style="left:106.5px;top:580px;font-size:11px;font-weight:bold;color:#1f5f3f;line-height:14px">テーブルシート</div>
<svg style="left:217.5px;top:581.5px" width="15" height="15" viewBox="0 0 15 15"><circle cx="7.5" cy="7.5" r="6.4" fill="none" stroke="#444" stroke-width="1.3"/><path d="M7.5 3.8v7.4M3.8 7.5h7.4" stroke="#444" stroke-width="1.5"/></svg>
<div style="left:17px;top:599px;width:806px;height:1px;background:#fff"></div>

<!-- status bar -->
<div style="left:17px;top:600px;width:806px;height:17px;background:#217346"></div>
<div style="left:24px;top:603.5px;font-size:9px;color:#e4f2e8;line-height:12px;-webkit-text-stroke:.2px #e4f2e8">準備完了</div>
<div style="left:657.5px;top:609.5px;width:9px;height:1.3px;background:#b9dcc5"></div>
<div style="left:671.5px;top:609.5px;width:97px;height:1.3px;background:#b9dcc5"></div>
<div style="left:720px;top:607px;width:1px;height:6px;background:#b9dcc5"></div>
<div style="left:724.5px;top:606px;width:4px;height:7.5px;background:#f2fbf5"></div>
<div style="left:773.5px;top:609.5px;width:10px;height:1.3px;background:#b9dcc5"></div>
<div style="left:777.8px;top:605.2px;width:1.3px;height:10px;background:#b9dcc5"></div>
<div style="left:793px;top:604px;font-size:10px;color:#eaf6ee;line-height:12px;-webkit-text-stroke:.3px #eaf6ee">140%</div>
</body></html>
